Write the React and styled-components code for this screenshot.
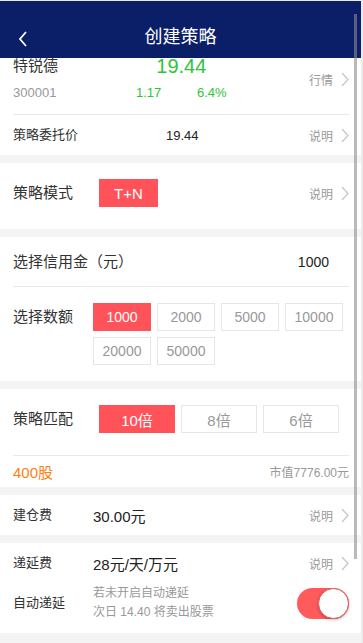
import React from "react";
import styled, { createGlobalStyle } from "styled-components";

const GlobalStyle = createGlobalStyle`
  html, body { margin: 0; padding: 0; background: #ececec; }
  body {
    font-family: "Liberation Sans", Arial, "Noto Sans CJK SC", sans-serif;
    -webkit-font-smoothing: antialiased;
  }
  * { box-sizing: border-box; }
`;

const Page = styled.div`
  position: relative;
  width: 361px;
  height: 642px;
  margin-top: 1px;
  background: #f4f4f4;
  overflow: hidden;
  display: flex;
  flex-direction: column;
`;

const Header = styled.header`
  position: relative;
  z-index: 2;
  flex: none;
  height: 57px;
  padding-top: 16px;
  background: #0b1f68;
  display: flex;
  align-items: center;
  justify-content: center;
`;

const Title = styled.h1`
  margin: 0;
  font-size: 18px;
  font-weight: normal;
  color: #fff;
  line-height: 41px;
`;

const BackButton = styled.button`
  position: absolute;
  left: 13px;
  top: 28px;
  width: 20px;
  height: 20px;
  padding: 0;
  border: 0;
  background: none;
  display: flex;
  align-items: center;
  justify-content: center;
`;

const Scroll = styled.main`
  flex: 1;
  overflow: hidden;
  display: flex;
  flex-direction: column;
  gap: 8px;
`;

const Card = styled.section`
  background: #fff;
  padding: 0 12px 0 13px;
  margin-top: ${(p) => p.$offset || 0}px;
  flex: none;
`;

const StockBlock = styled.div`
  display: flex;
  align-items: center;
  justify-content: space-between;
  padding: 10px 0 9px;
  border-bottom: 1px solid #e9e9e9;
`;

const StockGrid = styled.div`
  display: grid;
  grid-template-columns: 123px 61px auto;
  row-gap: 3px;
  align-items: center;
`;

const StockName = styled.div`
  font-size: 15px;
  color: #333;
  line-height: 24px;
`;

const Price = styled.div`
  grid-column: 2 / 4;
  text-align: center;
  font-size: 20px;
  color: #2cc43a;
  line-height: 22px;
`;

const Code = styled.div`
  font-size: 13px;
  color: #999;
  line-height: 24px;
`;

const Change = styled.div`
  font-size: 13px;
  color: #2cc43a;
  line-height: 24px;
`;

const Row = styled.div`
  display: flex;
  align-items: ${(p) => (p.$top ? "flex-start" : "center")};
  min-height: ${(p) => p.$h || 40}px;
  padding: ${(p) => p.$pad || "0"};
  border-bottom: ${(p) => (p.$divider ? "1px solid #e9e9e9" : "0")};
`;

const Label = styled.div`
  flex: none;
  width: ${(p) => p.$w || 80}px;
  font-size: ${(p) => p.$size || 13}px;
  color: #333;
  line-height: ${(p) => p.$lh || 20}px;
`;

const Value = styled.div`
  flex: 1;
  font-size: ${(p) => p.$size || 15}px;
  color: #222;
  text-align: ${(p) => p.$align || "left"};
  padding-right: ${(p) => p.$pr || 0}px;
`;

const Link = styled.a`
  flex: none;
  margin-left: auto;
  align-self: ${(p) => (p.$self ? p.$self : "auto")};
  display: flex;
  align-items: center;
  gap: 8px;
  height: 28px;
  font-size: 12px;
  color: #999;
  text-decoration: none;
`;

const Option = styled.div`
  height: 28px;
  display: flex;
  align-items: center;
  justify-content: center;
  font-size: ${(p) => p.$size || 13}px;
  background: ${(p) => (p.$active ? "#ff5259" : "#fff")};
  color: ${(p) => (p.$active ? "#fff" : "#999")};
  border: 1px solid ${(p) => (p.$active ? "#ff5259" : "#e6e6e6")};
  width: ${(p) => (p.$w ? `${p.$w}px` : "auto")};
`;

const OptionGrid = styled.div`
  display: grid;
  grid-template-columns: repeat(${(p) => p.$cols}, ${(p) => p.$cw}px);
  gap: 6px;
`;

const Shares = styled.div`
  font-size: 15px;
  color: #ff7f16;
`;

const Market = styled.div`
  margin-left: auto;
  font-size: 12px;
  color: #999;
`;

const Note = styled.div`
  flex: 1;
  font-size: 12px;
  color: #999;
  line-height: 19px;
`;

const Toggle = styled.div`
  position: relative;
  flex: none;
  width: 52px;
  height: 31px;
  border-radius: 16px;
  background: #ff5a5c;
`;

const Knob = styled.span`
  position: absolute;
  right: 0;
  top: 0;
  width: 31px;
  height: 31px;
  border-radius: 50%;
  background: #fff;
  border: 1px solid #e35a5c;
  box-shadow: 0 1px 3px rgba(0, 0, 0, 0.25);
`;

const ScrollThumb = styled.div`
  position: absolute;
  z-index: 3;
  left: 354px;
  top: 13px;
  width: 3px;
  height: 545px;
  background: rgba(140, 140, 140, 0.6);
`;

const Chevron = () => (
  <svg width="8" height="15" viewBox="0 0 8 15">
    <polyline points="1,1 7,7.5 1,14" fill="none" stroke="#c8c8c8" strokeWidth="1.3" />
  </svg>
);

const More = ({ children }) => (
  <Link href="#">
    {children}
    <Chevron />
  </Link>
);

export default function App() {
  return (
    <>
      <GlobalStyle />
      <Page>
        <Header>
          <BackButton aria-label="back">
            <svg width="10" height="16" viewBox="0 0 10 16">
              <polyline points="8,1 2,8 8,15" fill="none" stroke="#fff" strokeWidth="1.8" />
            </svg>
          </BackButton>
          <Title>创建策略</Title>
        </Header>
        <Scroll>
          <Card $offset={-14}>
            <StockBlock>
              <StockGrid>
                <StockName>特锐德</StockName>
                <Price>19.44</Price>
                <Code>300001</Code>
                <Change>1.17</Change>
                <Change>6.4%</Change>
              </StockGrid>
              <More>行情</More>
            </StockBlock>
            <Row $h={40}>
              <Label $w={153}>策略委托价</Label>
              <Value $size={13}>19.44</Value>
              <More>说明</More>
            </Row>
          </Card>

          <Card>
            <Row $top $pad="16px 0 22px">
              <Label $w={86} $size={15} $lh={28}>策略模式</Label>
              <Option $active $size={15} $w={59}>T+N</Option>
              <More>说明</More>
            </Row>
          </Card>

          <Card>
            <Row $h={50} $divider>
              <Label $w={200} $size={15}>选择信用金（元）</Label>
              <Value $size={14} $align="right" $pr={20}>1000</Value>
            </Row>
            <Row $top $pad="16px 0 16px">
              <Label $w={80} $size={15} $lh={28}>选择数额</Label>
              <OptionGrid $cols={4} $cw={58}>
                <Option $active $size={14}>1000</Option>
                <Option $size={14}>2000</Option>
                <Option $size={14}>5000</Option>
                <Option $size={14}>10000</Option>
                <Option $size={14}>20000</Option>
                <Option $size={14}>50000</Option>
              </OptionGrid>
            </Row>
          </Card>

          <Card>
            <Row $top $pad="16px 0 22px" $divider>
              <Label $w={86} $size={15} $lh={28}>策略匹配</Label>
              <OptionGrid $cols={3} $cw={76}>
                <Option $active $size={15}>10倍</Option>
                <Option $size={15}>8倍</Option>
                <Option $size={15}>6倍</Option>
              </OptionGrid>
            </Row>
            <Row $h={31}>
              <Shares>400股</Shares>
              <Market>市值7776.00元</Market>
            </Row>
          </Card>

          <Card>
            <Row $h={40}>
              <Label $w={80}>建仓费</Label>
              <Value>30.00元</Value>
              <More>说明</More>
            </Row>
          </Card>

          <Card>
            <Row $h={40}>
              <Label $w={80}>递延费</Label>
              <Value>28元/天/万元</Value>
              <More>说明</More>
            </Row>
            <Row $pad="1px 0 11px">
              <Label $w={80}>自动递延</Label>
              <Note>
                若未开启自动递延
                <br />
                次日 14.40 将卖出股票
              </Note>
              <Toggle>
                <Knob />
              </Toggle>
            </Row>
          </Card>
        </Scroll>
        <ScrollThumb />
      </Page>
    </>
  );
}
